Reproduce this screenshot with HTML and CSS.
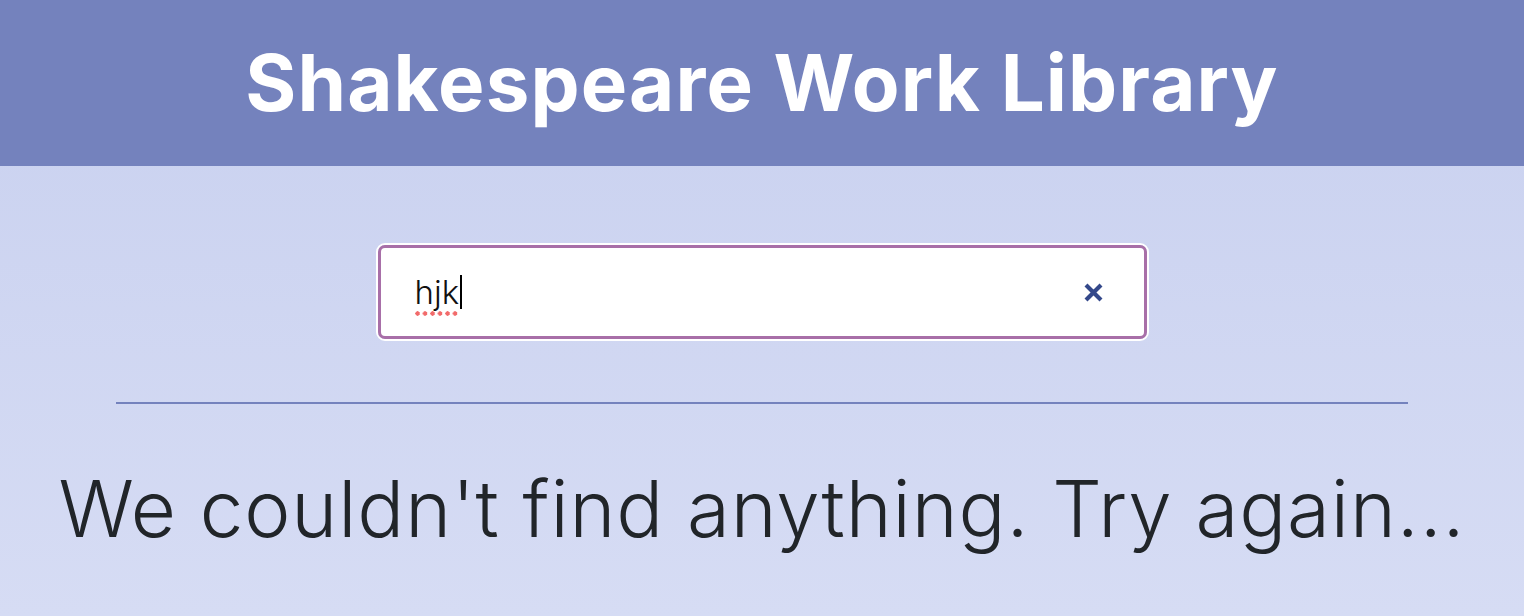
FILE: index.html
```html
<!DOCTYPE html>
<html lang="en">
<head>
<meta charset="utf-8">
<title>Shakespeare Work Library</title>
<link rel="stylesheet" href="styles.css">
</head>
<body>
<header class="top-bar">
  <h1 class="title">Shakespeare Work Library</h1>
</header>
<main class="content">
  <form class="search">
    <div class="search-field">
      <span class="search-text"><span class="typo">hjk</span><span class="caret"></span></span>
      <button type="button" class="clear" aria-label="Clear">
        <svg width="19" height="19" viewBox="0 0 19 19"><path d="M2 2 L17 17 M17 2 L2 17" stroke="#33488a" stroke-width="4.2" stroke-linecap="butt"/></svg>
      </button>
    </div>
  </form>
  <hr class="divider">
  <p class="empty">We couldn't find anything. Try again...</p>
</main>
</body>
</html>
```
FILE: styles.css
```css
* { box-sizing: border-box; }
html, body { margin: 0; padding: 0; }
body {
  width: 1524px;
  height: 616px;
  overflow: hidden;
  font-family: Inter, "Noto Sans", sans-serif;
  background: linear-gradient(180deg, #c8d0ef 0%, #d6dcf4 100%);
}
.top-bar {
  height: 166px;
  background: #7482bd;
  display: flex;
  align-items: center;
  justify-content: center;
}
.title {
  margin: 0;
  color: #fff;
  font-size: 78px;
  font-weight: 700;
  letter-spacing: 1.1px;
  line-height: 1;
}
.content {
  display: flex;
  flex-direction: column;
  align-items: center;
  padding-top: 77px;
}
.search {
  width: 773px;
  height: 98px;
  border: 2px solid #fff;
  border-radius: 9px;
}
.search-field {
  height: 100%;
  border: 3px solid #a86fa8;
  border-radius: 7px;
  background: #fff;
  display: flex;
  align-items: center;
  padding: 0 41px 0 34px;
}
.search-text {
  flex: 1;
  display: flex;
  align-items: center;
  font-size: 33px;
  font-weight: 300;
  color: #111;
}
.typo {
  position: relative;
}
.typo::after {
  content: "";
  position: absolute;
  left: 0;
  right: 0;
  bottom: -4px;
  height: 5px;
  background: radial-gradient(circle at 2.5px 2.5px, #f26b6b 2px, transparent 2.4px) 0 0 / 7.5px 5px repeat-x;
}
.caret {
  display: inline-block;
  width: 2px;
  height: 34px;
  background: #000;
  margin-left: 1px;
}
.clear {
  border: 0;
  background: none;
  padding: 0;
  width: 19px;
  height: 19px;
  display: flex;
}
.divider {
  width: 1292px;
  margin: 61px 0 0 0;
  border: 0;
  height: 2px;
  background: #7482bd;
}
.empty {
  margin: 66px 0 0 0;
  font-size: 78px;
  font-weight: 300;
  color: #212529;
  letter-spacing: 0.9px;
  line-height: 1;
}
```
